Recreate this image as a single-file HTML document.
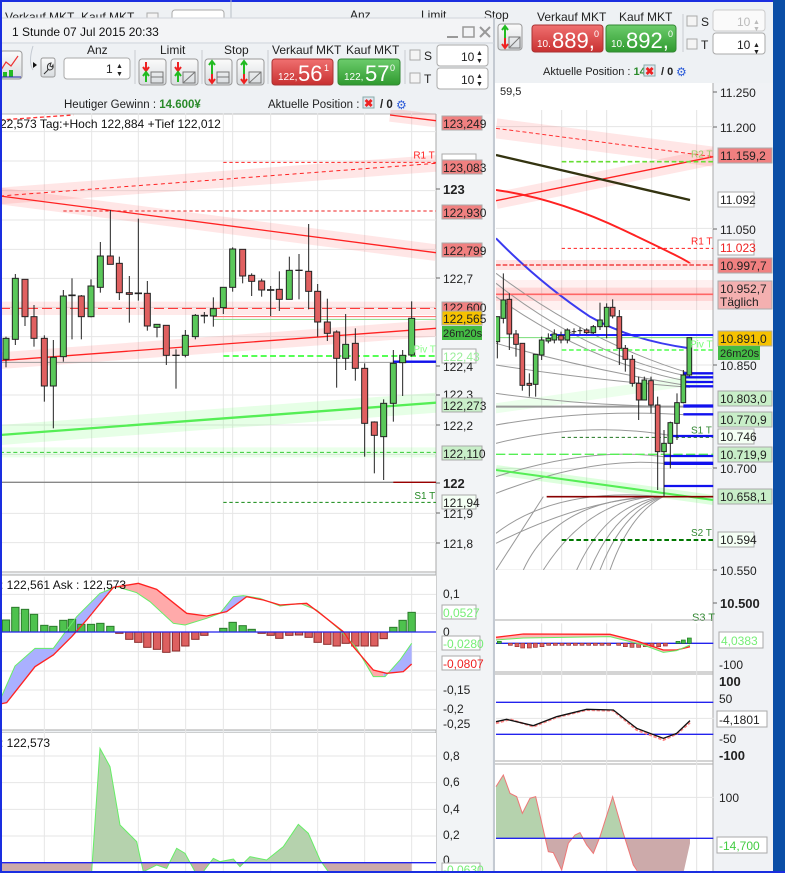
<!DOCTYPE html>
<html><head><meta charset="utf-8"><style>
html,body{margin:0;padding:0;background:#eef1f4;}
svg{display:block;font-family:"Liberation Sans",sans-serif;}
</style></head><body>
<svg width="785" height="873" viewBox="0 0 785 873" xmlns="http://www.w3.org/2000/svg">
<defs>
<clipPath id="cL"><rect x="0" y="0" width="1308" height="1380"/></clipPath>
<clipPath id="cR"><rect x="18" y="0" width="652" height="1380"/></clipPath>
<clipPath id="mBlue"><rect x="0" y="0" width="330" height="600"/><rect x="660" y="0" width="140" height="600"/><rect x="1150" y="0" width="200" height="600"/></clipPath>
<clipPath id="mPink"><rect x="330" y="0" width="330" height="600"/><rect x="800" y="0" width="350" height="600"/></clipPath>
<clipPath id="up1"><rect x="0" y="520" width="1308" height="388"/></clipPath>
<clipPath id="dn1"><rect x="0" y="908" width="1308" height="40"/></clipPath>
<clipPath id="up2"><rect x="18" y="612" width="652" height="223"/></clipPath>
<clipPath id="dn2"><rect x="18" y="835" width="652" height="110"/></clipPath>
<linearGradient id="gRed" x1="0" y1="0" x2="0" y2="1"><stop offset="0" stop-color="#f07070"/><stop offset="1" stop-color="#c83030"/></linearGradient>
<linearGradient id="gGrn" x1="0" y1="0" x2="0" y2="1"><stop offset="0" stop-color="#6ccc6c"/><stop offset="1" stop-color="#2f9a2f"/></linearGradient>
<linearGradient id="gBtn" x1="0" y1="0" x2="0" y2="1"><stop offset="0" stop-color="#fbfbfb"/><stop offset="1" stop-color="#d8dcdf"/></linearGradient>
</defs>

<!-- ============ BACKGROUND WINDOW (right) ============ -->
<rect x="0" y="0" width="785" height="873" fill="#eef1f4"/>
<rect x="0" y="0" width="785" height="2" fill="#1a2ee0"/>
<rect x="773" y="0" width="12" height="873" fill="#0b4ea6"/>
<line x1="231" y1="0" x2="231" y2="18" stroke="#b8bec6"/>
<text x="5" y="21" font-size="12" fill="#222">Verkauf MKT</text>
<text x="81" y="21" font-size="12" fill="#222">Kauf MKT</text>
<rect x="147" y="13" width="11" height="11" fill="#f4f4f4" stroke="#aaa"/>
<rect x="172" y="10" width="52" height="18" rx="3" fill="#fff" stroke="#aaa"/>
<text x="350" y="19" font-size="12" fill="#222">Anz</text>
<text x="421" y="19" font-size="12" fill="#222">Limit</text>
<text x="484" y="19" font-size="12" fill="#222">Stop</text>
<rect x="498" y="24" width="24" height="26" rx="3" fill="url(#gBtn)" stroke="#999"/>
<path d="M505,38 L505,27 M502,30 L505,26 L508,30" stroke="#2b2" stroke-width="2" fill="none"/>
<path d="M505,38 L505,47 M502,44 L505,48 L508,44" stroke="#e22" stroke-width="2" fill="none"/>
<g fill="none" stroke="#777"><rect x="509" y="37" width="11" height="11"/><line x1="509" y1="48" x2="520" y2="37"/></g>
<text x="537" y="21" font-size="12" fill="#222">Verkauf MKT</text>
<text x="619" y="21" font-size="12" fill="#222">Kauf MKT</text>
<rect x="532" y="25" width="71" height="27" rx="3" fill="url(#gRed)" stroke="#a33"/>
<text x="537" y="47" font-size="10" fill="#fff">10.</text><text x="552" y="48" font-size="22" fill="#fff">889,</text><text x="594" y="37" font-size="9" fill="#fff">0</text>
<rect x="606" y="25" width="70" height="27" rx="3" fill="url(#gGrn)" stroke="#383"/>
<text x="611" y="47" font-size="10" fill="#fff">10.</text><text x="626" y="48" font-size="22" fill="#fff">892,</text><text x="668" y="37" font-size="9" fill="#fff">0</text>
<line x1="683" y1="14" x2="683" y2="52" stroke="#c8ccd0"/>
<rect x="687" y="16" width="10" height="10" fill="#f4f4f4" stroke="#aaa"/><text x="701" y="26" font-size="12" fill="#222">S</text>
<rect x="687" y="39" width="10" height="10" fill="#f4f4f4" stroke="#aaa"/><text x="701" y="49" font-size="12" fill="#222">T</text>
<rect x="713" y="10" width="52" height="21" rx="3" fill="#fafafa" stroke="#ccc"/><text x="737" y="26" font-size="12" fill="#bbb">10</text>
<rect x="713" y="33" width="52" height="21" rx="3" fill="#fff" stroke="#aaa"/><text x="737" y="49" font-size="12" fill="#222">10</text>
<text x="753" y="24" font-size="7" fill="#bbb">▲</text><text x="753" y="31" font-size="7" fill="#bbb">▼</text>
<text x="753" y="47" font-size="7" fill="#222">▲</text><text x="753" y="54" font-size="7" fill="#222">▼</text>
<text x="543" y="75" font-size="11" fill="#222">Aktuelle Position : <tspan fill="#2a8a2a" font-weight="bold">14</tspan></text>
<rect x="644" y="65" width="11" height="11" fill="#dfe6ee" stroke="#8aa"/><text x="645" y="75" font-size="11" fill="#e22" font-weight="bold">✖</text>
<text x="661" y="75" font-size="11" fill="#222" font-weight="bold">/ 0</text>
<text x="676" y="76" font-size="12" fill="#2a5ad8">⚙</text>
<rect x="495" y="83" width="218" height="790" fill="#fff"/>
<rect x="713" y="83" width="60" height="790" fill="#f0f2f5"/>
<line x1="713" y1="83" x2="713" y2="873" stroke="#aaa"/>

<g transform="translate(490,110) scale(0.33333)">
 <g clip-path="url(#cR)">
  <g stroke="#e4e4e4" stroke-width="3">
   <line x1="155" y1="-100" x2="155" y2="1400"/><line x1="215" y1="-100" x2="215" y2="1400"/><line x1="290" y1="-100" x2="290" y2="1400"/><line x1="350" y1="-100" x2="350" y2="1400"/><line x1="485" y1="-100" x2="485" y2="1400"/><line x1="620" y1="-100" x2="620" y2="1400"/>
   <line x1="0" y1="-55" x2="670" y2="-55"/><line x1="0" y1="50" x2="670" y2="50"/><line x1="0" y1="355" x2="670" y2="355"/><line x1="0" y1="765" x2="670" y2="765"/><line x1="0" y1="1075" x2="670" y2="1075"/><line x1="0" y1="1380" x2="670" y2="1380"/>
  </g>
  <line x1="18" y1="55" x2="670" y2="140" stroke="#ff4040" stroke-opacity="0.13" stroke-width="60"/>
  <line x1="18" y1="272" x2="670" y2="140" stroke="#ff4040" stroke-opacity="0.13" stroke-width="50"/>
  <line x1="18" y1="465" x2="670" y2="465" stroke="#ff4040" stroke-opacity="0.15" stroke-width="30"/>
  <rect x="18" y="510" width="652" height="90" fill="#ff4040" fill-opacity="0.08"/>
  <line x1="18" y1="553" x2="670" y2="553" stroke="#ff4040" stroke-opacity="0.15" stroke-width="40"/>
  <line x1="18" y1="1080" x2="670" y2="1170" stroke="#40ff40" stroke-opacity="0.18" stroke-width="30"/>
  <line x1="18" y1="850" x2="670" y2="850" stroke="#40ff40" stroke-opacity="0.1" stroke-width="30" transform="rotate(-8 340 900)"/>
  <g fill="none" stroke="#999" stroke-width="3">
   <path d="M18,490 Q300,700 600,790"/><path d="M18,520 Q300,740 600,800"/><path d="M18,560 Q300,760 600,815"/>
   <path d="M18,700 Q300,780 600,828"/><path d="M18,765 Q300,810 600,832"/><path d="M18,850 Q300,890 600,890"/>
   <path d="M18,890 L600,890" stroke-width="6"/><path d="M18,945 Q300,895 600,915"/><path d="M18,1000 Q300,930 560,980"/>
   <path d="M18,1150 Q300,1040 520,1060"/><path d="M18,1100 Q300,1010 520,1040"/>
   <path d="M520,1160 Q300,1160 18,1300"/><path d="M520,1160 Q200,1160 100,1380"/><path d="M520,1160 Q300,1160 160,1380"/>
   <path d="M520,1160 Q350,1180 260,1380"/><path d="M520,1160 Q380,1190 300,1380"/><path d="M520,1160 Q400,1200 330,1380"/><path d="M520,1160 Q420,1210 360,1380"/>
   <path d="M520,1160 Q200,1130 18,1270"/><path d="M18,1380 L160,1160"/>
  </g>
  <line x1="18" y1="55" x2="670" y2="140" stroke="#f33" stroke-width="3" stroke-dasharray="12 8"/>
  <line x1="18" y1="272" x2="670" y2="140" stroke="#f22" stroke-width="4"/>
  <line x1="18" y1="135" x2="600" y2="270" stroke="#333310" stroke-width="7"/>
  <path d="M18,240 Q200,265 400,360 T600,460" fill="none" stroke="#f22" stroke-width="6"/>
  <path d="M18,385 Q150,520 300,620 Q420,690 600,715" fill="none" stroke="#3a3af0" stroke-width="6"/>
  <line x1="215" y1="155" x2="670" y2="155" stroke="#66dd33" stroke-width="5" stroke-dasharray="14 8"/>
  <line x1="215" y1="415" x2="670" y2="415" stroke="#f22" stroke-width="3" stroke-dasharray="10 8"/>
  <line x1="18" y1="465" x2="670" y2="465" stroke="#e22" stroke-width="4" stroke-dasharray="14 6"/>
  <line x1="18" y1="553" x2="670" y2="553" stroke="#f66" stroke-width="5"/>
  <line x1="180" y1="675" x2="670" y2="675" stroke="#22f" stroke-width="6"/>
  <line x1="18" y1="683" x2="670" y2="683" stroke="#7d7" stroke-width="3"/>
  <line x1="215" y1="720" x2="670" y2="720" stroke="#6f6" stroke-width="5" stroke-dasharray="14 8"/>
  <line x1="215" y1="982" x2="670" y2="982" stroke="#272" stroke-width="3" stroke-dasharray="10 8"/>
  <line x1="18" y1="1033" x2="670" y2="1033" stroke="#5e5" stroke-width="4" stroke-dasharray="28 10"/>
  <line x1="18" y1="1080" x2="670" y2="1170" stroke="#5e5" stroke-width="6"/>
  <line x1="170" y1="1160" x2="670" y2="1160" stroke="#800" stroke-width="5"/>
  <line x1="215" y1="1290" x2="670" y2="1290" stroke="#070" stroke-width="6" stroke-dasharray="14 8"/>
  <g stroke="#11e" stroke-width="7">
   <line x1="580" y1="790" x2="670" y2="790"/><line x1="580" y1="802" x2="670" y2="802"/><line x1="580" y1="816" x2="670" y2="816"/><line x1="580" y1="829" x2="670" y2="829"/>
   <line x1="580" y1="888" x2="670" y2="888" stroke-width="10"/><line x1="580" y1="913" x2="670" y2="913"/><line x1="540" y1="978" x2="670" y2="978"/>
   <line x1="522" y1="1038" x2="670" y2="1038"/><line x1="522" y1="1060" x2="670" y2="1060" stroke-width="10"/><line x1="522" y1="1128" x2="670" y2="1128"/>
  </g>
  <g stroke="#222" stroke-width="3">
   <line x1="22" y1="620" x2="22" y2="745"/><rect x="15" y="620" width="14" height="75" fill="#5ac85a"/>
   <line x1="40" y1="490" x2="40" y2="640"/><rect x="33" y="570" width="14" height="55" fill="#5ac85a"/>
   <line x1="58" y1="550" x2="58" y2="720"/><rect x="51" y="568" width="14" height="104" fill="#e06060"/>
   <line x1="78" y1="660" x2="78" y2="740"/><rect x="71" y="672" width="14" height="31" fill="#e06060"/>
   <line x1="97" y1="700" x2="97" y2="842"/><rect x="90" y="700" width="14" height="126" fill="#e06060"/>
   <line x1="118" y1="790" x2="118" y2="860"/><rect x="111" y="820" width="14" height="6" fill="#e06060"/>
   <line x1="137" y1="733" x2="137" y2="860"/><rect x="130" y="733" width="14" height="90" fill="#5ac85a"/>
   <line x1="155" y1="680" x2="155" y2="750"/><rect x="148" y="690" width="14" height="45" fill="#5ac85a"/>
   <line x1="175" y1="670" x2="175" y2="700"/><rect x="168" y="685" width="14" height="8" fill="#5ac85a"/>
   <line x1="193" y1="658" x2="193" y2="700"/><rect x="186" y="672" width="14" height="18" fill="#5ac85a"/>
   <line x1="213" y1="665" x2="213" y2="700"/><rect x="206" y="677" width="14" height="13" fill="#e06060"/>
   <line x1="232" y1="655" x2="232" y2="700"/><rect x="225" y="660" width="14" height="30" fill="#5ac85a"/>
   <line x1="252" y1="655" x2="252" y2="672"/><line x1="245" y1="665" x2="259" y2="665"/>
   <line x1="270" y1="652" x2="270" y2="672"/><line x1="263" y1="662" x2="277" y2="662"/>
   <line x1="290" y1="655" x2="290" y2="672"/><rect x="283" y="660" width="14" height="8" fill="#e06060"/>
   <line x1="310" y1="645" x2="310" y2="672"/><rect x="303" y="650" width="14" height="18" fill="#5ac85a"/>
   <line x1="330" y1="578" x2="330" y2="660"/><rect x="323" y="630" width="14" height="20" fill="#5ac85a"/>
   <line x1="350" y1="580" x2="350" y2="685"/><rect x="343" y="592" width="14" height="58" fill="#5ac85a"/>
   <line x1="368" y1="568" x2="368" y2="625"/><rect x="361" y="592" width="14" height="26" fill="#e06060"/>
   <line x1="388" y1="600" x2="388" y2="765"/><rect x="381" y="620" width="14" height="95" fill="#e06060"/>
   <line x1="406" y1="705" x2="406" y2="785"/><rect x="399" y="715" width="14" height="33" fill="#e06060"/>
   <line x1="427" y1="735" x2="427" y2="830"/><rect x="420" y="748" width="14" height="72" fill="#e06060"/>
   <line x1="446" y1="800" x2="446" y2="930"/><rect x="439" y="820" width="14" height="50" fill="#e06060"/>
   <line x1="463" y1="800" x2="463" y2="870"/><rect x="456" y="810" width="14" height="60" fill="#5ac85a"/>
   <line x1="483" y1="800" x2="483" y2="910"/><rect x="476" y="812" width="14" height="73" fill="#e06060"/>
   <line x1="503" y1="860" x2="503" y2="1140"/><rect x="496" y="885" width="14" height="140" fill="#e06060"/>
   <line x1="522" y1="960" x2="522" y2="1160"/><rect x="515" y="1000" width="14" height="25" fill="#5ac85a"/>
   <line x1="541" y1="935" x2="541" y2="1075"/><rect x="534" y="938" width="14" height="62" fill="#5ac85a"/>
   <line x1="561" y1="850" x2="561" y2="990"/><rect x="554" y="878" width="14" height="62" fill="#5ac85a"/>
   <line x1="580" y1="780" x2="580" y2="880"/><rect x="573" y="795" width="14" height="83" fill="#5ac85a"/>
   <line x1="598" y1="683" x2="598" y2="800"/><rect x="591" y="683" width="14" height="112" fill="#5ac85a"/>
  </g>
  <text x="603" y="143" font-size="30" fill="#9c6">R2 T</text>
  <text x="603" y="403" font-size="30" fill="#f22">R1 T</text>
  <text x="600" y="712" font-size="30" fill="#7f7">Piv T</text>
  <text x="603" y="970" font-size="30" fill="#383">S1 T</text>
  <text x="603" y="1278" font-size="30" fill="#383">S2 T</text>
 </g>
</g>
<text x="500" y="95" font-size="11" fill="#222">59,5</text>
<text x="692" y="621" font-size="11" fill="#383">S3 T</text>

<g font-size="12" fill="#222">
 <g stroke="#666"><line x1="713" y1="92" x2="717" y2="92"/><line x1="713" y1="127" x2="717" y2="127"/><line x1="713" y1="229" x2="717" y2="229"/><line x1="713" y1="365" x2="717" y2="365"/><line x1="713" y1="468" x2="717" y2="468"/><line x1="713" y1="570" x2="717" y2="570"/><line x1="713" y1="603" x2="717" y2="603"/></g>
 <text x="720" y="97">11.250</text><text x="720" y="132">11.200</text>
 <rect x="718" y="148" width="54" height="15" fill="#f08080" stroke="#aaa"/><text x="720" y="160">11.159,2</text>
 <rect x="718" y="192" width="36" height="15" fill="#fff" stroke="#aaa"/><text x="720" y="204">11.092</text>
 <text x="720" y="234">11.050</text>
 <rect x="718" y="240" width="36" height="15" fill="#fff" stroke="#aaa"/><text x="720" y="252" fill="#e22">11.023</text>
 <rect x="718" y="258" width="54" height="15" fill="#f08080" stroke="#aaa"/><text x="720" y="270">10.997,7</text>
 <rect x="718" y="281" width="54" height="28" fill="#f4b0b0" stroke="#aaa"/><text x="720" y="293">10.952,7</text><text x="720" y="306">Täglich</text>
 <rect x="718" y="331" width="54" height="15" fill="#f6c200" stroke="#aaa"/><text x="720" y="343">10.891,0</text>
 <rect x="718" y="346" width="42" height="14" fill="#44bb44"/><text x="720" y="357" font-size="11">26m20s</text>
 <text x="720" y="370">10.850</text>
 <rect x="718" y="391" width="54" height="15" fill="#c8eec8" stroke="#aaa"/><text x="720" y="403">10.803,0</text>
 <rect x="718" y="412" width="54" height="15" fill="#c8eec8" stroke="#aaa"/><text x="720" y="424">10.770,9</text>
 <rect x="718" y="429" width="36" height="15" fill="#f4fff4" stroke="#aaa"/><text x="720" y="441">10.746</text>
 <rect x="718" y="447" width="54" height="15" fill="#c8eec8" stroke="#aaa"/><text x="720" y="459">10.719,9</text>
 <text x="720" y="473">10.700</text>
 <rect x="718" y="489" width="54" height="15" fill="#c8eec8" stroke="#aaa"/><text x="720" y="501">10.658,1</text>
 <rect x="718" y="532" width="36" height="15" fill="#f4fff4" stroke="#aaa"/><text x="720" y="544">10.594</text>
 <text x="720" y="575">10.550</text>
 <text x="720" y="608" font-weight="bold" font-size="13">10.500</text>
</g>

<line x1="495" y1="620" x2="713" y2="620" stroke="#aaa"/>
<line x1="495" y1="672" x2="713" y2="672" stroke="#aaa"/>
<line x1="495" y1="674" x2="713" y2="674" stroke="#aaa"/>
<line x1="495" y1="761" x2="713" y2="761" stroke="#aaa"/>
<line x1="495" y1="764" x2="713" y2="764" stroke="#aaa"/>
<g transform="translate(490,560) scale(0.33333)">
 <g stroke="#e4e4e4" stroke-width="3">
  <line x1="155" y1="190" x2="155" y2="940"/><line x1="215" y1="190" x2="215" y2="940"/><line x1="350" y1="190" x2="350" y2="940"/><line x1="485" y1="190" x2="485" y2="940"/><line x1="620" y1="190" x2="620" y2="940"/>
  <line x1="18" y1="475" x2="670" y2="475"/><line x1="18" y1="712" x2="670" y2="712"/>
 </g>
 <line x1="18" y1="250" x2="670" y2="250" stroke="#22e" stroke-width="4"/>
 <g fill="#e06060" stroke="#933" stroke-width="2">
  <rect x="55" y="250" width="12" height="6"/><rect x="75" y="250" width="12" height="10"/><rect x="92" y="250" width="12" height="14"/><rect x="112" y="250" width="12" height="14"/><rect x="130" y="250" width="12" height="12"/><rect x="150" y="250" width="12" height="10"/><rect x="170" y="250" width="12" height="6"/><rect x="190" y="250" width="12" height="6"/><rect x="210" y="250" width="12" height="6"/><rect x="230" y="250" width="12" height="6"/><rect x="250" y="250" width="12" height="6"/><rect x="270" y="250" width="12" height="6"/><rect x="290" y="250" width="12" height="6"/><rect x="310" y="250" width="12" height="6"/><rect x="330" y="250" width="12" height="6"/><rect x="350" y="250" width="12" height="6"/><rect x="380" y="250" width="12" height="6"/><rect x="400" y="250" width="12" height="10"/><rect x="420" y="250" width="12" height="12"/><rect x="440" y="250" width="12" height="12"/><rect x="460" y="250" width="12" height="10"/><rect x="480" y="250" width="12" height="10"/><rect x="500" y="250" width="12" height="10"/><rect x="520" y="250" width="12" height="8"/>
 </g>
 <g fill="#44bb44" stroke="#272" stroke-width="2"><rect x="22" y="244" width="12" height="6"/><rect x="558" y="244" width="12" height="6"/><rect x="574" y="240" width="12" height="10"/><rect x="592" y="234" width="12" height="16"/></g>
 <path d="M18,232 L100,222 L360,223 L440,243 L520,270 L560,270 L600,260 L600,255 L560,272 L520,277 L460,255 L360,230 L100,234 L18,240 Z" fill="#f99" fill-opacity="0.7"/>
 <polyline points="18,232 100,222 360,223 440,243 520,270 560,270 600,260" fill="none" stroke="#f22" stroke-width="4"/>
 <polyline points="18,240 100,234 360,230 460,255 520,277 560,272 600,255" fill="none" stroke="#6e6" stroke-width="3"/>
 <line x1="18" y1="427" x2="670" y2="427" stroke="#22e" stroke-width="4"/>
 <line x1="18" y1="523" x2="670" y2="523" stroke="#22e" stroke-width="4"/>
 <polyline points="18,490 60,478 130,500 200,472 290,450 370,452 440,510 520,540 560,522 600,488" fill="none" stroke="#f88" stroke-width="6" stroke-dasharray="10 5"/>
 <polyline points="18,485 50,478 130,497 200,470 290,448 370,450 440,505 520,535 560,520 600,482" fill="none" stroke="#111" stroke-width="4"/>
 <g clip-path="url(#up2)"><polygon points="18,835 18,680 40,645 60,700 80,710 97,760 120,715 137,710 175,875 190,878 215,930 235,850 255,825 270,818 290,855 310,880 330,830 368,710 400,820 430,915 450,940 580,940 600,850 600,835" fill="#b5d2ad"/></g>
 <g clip-path="url(#dn2)"><polygon points="18,835 18,680 40,645 60,700 80,710 97,760 120,715 137,710 175,875 190,878 215,930 235,850 255,825 270,818 290,855 310,880 330,830 368,710 400,820 430,915 450,940 580,940 600,850 600,835" fill="#ccaaaa"/></g>
 <polyline points="18,680 40,645 60,700 80,710 97,760 120,715 137,710 175,875 190,878 215,930 235,850 255,825 270,818 290,855 310,880 330,830 368,710 400,820 430,915 450,945" fill="none" stroke="#e77" stroke-width="3"/>
 <line x1="18" y1="835" x2="670" y2="835" stroke="#22e" stroke-width="4"/>
</g>
<g font-size="12" fill="#222">
 <rect x="719" y="632" width="44" height="16" fill="#fff" stroke="#aaa"/><text x="721" y="645" fill="#7e7">4,0383</text>
 <text x="719" y="669">-100</text>
 <text x="719" y="686" font-weight="bold" font-size="13">100</text>
 <text x="719" y="703">50</text>
 <rect x="717" y="711" width="50" height="16" fill="#fff" stroke="#aaa"/><text x="719" y="724">-4,1801</text>
 <text x="719" y="743">-50</text>
 <text x="719" y="760" font-weight="bold" font-size="13">-100</text>
 <text x="719" y="802">100</text>
 <rect x="717" y="837" width="50" height="16" fill="#fff" stroke="#aaa"/><text x="719" y="850" fill="#4c4">-14,700</text>
</g>

<!-- ============ FRONT WINDOW ============ -->
<rect x="0" y="18" width="494" height="855" fill="#eef1f4"/>
<rect x="0" y="18" width="494" height="24" fill="#f3f4f6"/>
<line x1="494" y1="18" x2="494" y2="873" stroke="#c4cad2" stroke-width="2"/>
<line x1="0" y1="18" x2="494" y2="18" stroke="#d0d5db"/>
<text x="12" y="36" font-size="12" fill="#111">1 Stunde  07 Jul 2015 20:33</text>
<line x1="447" y1="37" x2="458" y2="37" stroke="#999" stroke-width="2"/>
<rect x="463" y="27" width="11" height="10" fill="none" stroke="#999" stroke-width="1.5"/>
<path d="M480,27 L490,37 M490,27 L480,37" stroke="#999" stroke-width="2"/>
<line x1="0" y1="43" x2="494" y2="43" stroke="#d0d5db"/>
<rect x="0" y="51" width="22" height="28" rx="3" fill="url(#gBtn)" stroke="#999"/>
<path d="M1,70 L6,62 L11,66 L18,56" fill="none" stroke="#e33" stroke-width="1.2"/>
<rect x="3" y="72" width="4" height="5" fill="#2b2"/><rect x="9" y="70" width="4" height="7" fill="#2b2"/>
<line x1="0" y1="77" x2="21" y2="77" stroke="#22a"/>
<path d="M33,70 Q28,62 33,46" fill="none" stroke="#c4cad2"/>
<path d="M33,62 L37,65 L33,68 Z" fill="#111"/>
<rect x="41" y="58" width="14" height="19" rx="2" fill="url(#gBtn)" stroke="#999"/>
<path d="M44,74 L49,69 M48,70 Q46,64 51,63 L50,66 L52,67 L53,65 Q54,70 49,70" fill="none" stroke="#333" stroke-width="1"/>
<text x="87" y="54" font-size="12" fill="#222">Anz</text>
<rect x="64" y="58" width="66" height="21" rx="3" fill="#fff" stroke="#aaa"/>
<text x="106" y="73" font-size="12" fill="#222">1</text>
<text x="116" y="68" font-size="7" fill="#222">▲</text><text x="116" y="76" font-size="7" fill="#222">▼</text>
<line x1="135" y1="50" x2="135" y2="84" stroke="#c8ccd0"/>
<text x="160" y="54" font-size="12" fill="#222">Limit</text>
<rect x="139" y="59" width="27" height="26" rx="3" fill="url(#gBtn)" stroke="#999"/>
<rect x="171" y="59" width="27" height="26" rx="3" fill="url(#gBtn)" stroke="#999"/>
<line x1="202" y1="50" x2="202" y2="84" stroke="#c8ccd0"/>
<text x="224" y="54" font-size="12" fill="#222">Stop</text>
<rect x="205" y="59" width="27" height="26" rx="3" fill="url(#gBtn)" stroke="#999"/>
<rect x="237" y="59" width="27" height="26" rx="3" fill="url(#gBtn)" stroke="#999"/>
<g stroke-width="2">
 <path d="M146,62 L146,70 M143,67 L146,71 L149,67" stroke="#e22" fill="none"/><path d="M146,82 L146,73 M143,76 L146,72 L149,76" stroke="#2b2" fill="none"/>
 <path d="M178,62 L178,70 M175,67 L178,71 L181,67" stroke="#e22" fill="none"/><path d="M178,82 L178,73 M175,76 L178,72 L181,76" stroke="#2b2" fill="none"/>
 <path d="M212,74 L212,62 M209,65 L212,61 L215,65" stroke="#2b2" fill="none"/><path d="M212,74 L212,82 M209,79 L212,83 L215,79" stroke="#e22" fill="none"/>
 <path d="M244,74 L244,62 M241,65 L244,61 L247,65" stroke="#2b2" fill="none"/><path d="M244,74 L244,82 M241,79 L244,83 L247,79" stroke="#e22" fill="none"/>
</g>
<g fill="none" stroke="#777"><rect x="151" y="72" width="12" height="11"/><line x1="151" y1="77" x2="163" y2="77"/><rect x="183" y="72" width="12" height="11"/><line x1="183" y1="83" x2="195" y2="72"/><rect x="217" y="72" width="12" height="11"/><line x1="217" y1="77" x2="229" y2="77"/><rect x="249" y="72" width="12" height="11"/><line x1="249" y1="83" x2="261" y2="72"/></g>
<line x1="268" y1="50" x2="268" y2="84" stroke="#c8ccd0"/>
<text x="272" y="54" font-size="12" fill="#222">Verkauf MKT</text>
<text x="346" y="54" font-size="12" fill="#222">Kauf MKT</text>
<rect x="272" y="59" width="61" height="26" rx="3" fill="url(#gRed)" stroke="#a33"/>
<text x="278" y="80" font-size="10" fill="#fff">122,</text><text x="298" y="81" font-size="22" fill="#fff">56</text><text x="324" y="71" font-size="9" fill="#fff">1</text>
<rect x="338" y="59" width="62" height="26" rx="3" fill="url(#gGrn)" stroke="#383"/>
<text x="344" y="80" font-size="10" fill="#fff">122,</text><text x="365" y="81" font-size="22" fill="#fff">57</text><text x="390" y="71" font-size="9" fill="#fff">0</text>
<line x1="405" y1="50" x2="405" y2="84" stroke="#c8ccd0"/>
<rect x="410" y="50" width="10" height="10" fill="#f4f4f4" stroke="#aaa"/><text x="424" y="60" font-size="12" fill="#222">S</text>
<rect x="410" y="73" width="10" height="10" fill="#f4f4f4" stroke="#aaa"/><text x="424" y="83" font-size="12" fill="#222">T</text>
<rect x="437" y="45" width="51" height="21" rx="3" fill="#fff" stroke="#aaa"/><text x="461" y="61" font-size="12" fill="#222">10</text>
<rect x="437" y="68" width="51" height="21" rx="3" fill="#fff" stroke="#aaa"/><text x="461" y="84" font-size="12" fill="#222">10</text>
<text x="476" y="55" font-size="7" fill="#222">▲</text><text x="476" y="63" font-size="7" fill="#222">▼</text>
<text x="476" y="78" font-size="7" fill="#222">▲</text><text x="476" y="86" font-size="7" fill="#222">▼</text>
<text x="64" y="108" font-size="11.5" fill="#222">Heutiger Gewinn : <tspan fill="#2a8a2a" font-weight="bold">14.600¥</tspan></text>
<text x="268" y="108" font-size="11.5" fill="#222">Aktuelle Position : <tspan fill="#2a8a2a" font-weight="bold">1</tspan></text>
<rect x="363" y="97" width="11" height="11" fill="#dfe6ee" stroke="#8aa"/><text x="364" y="107" font-size="11" fill="#e22" font-weight="bold">✖</text>
<text x="380" y="108" font-size="11.5" fill="#222" font-weight="bold">/ 0</text>
<text x="396" y="109" font-size="12" fill="#2a5ad8">⚙</text>

<rect x="0" y="114" width="436" height="459" fill="#fff"/>
<rect x="436" y="114" width="56" height="759" fill="#f2f4f6"/>
<line x1="436" y1="114" x2="436" y2="873" stroke="#aaa"/>
<line x1="0" y1="114" x2="436" y2="114" stroke="#bbb"/>
<g transform="translate(0,110) scale(0.33333)">
 <g clip-path="url(#cL)">
 <g stroke="#e6e6e6" stroke-width="3">
  <line x1="133" y1="10" x2="133" y2="1380"/><line x1="275" y1="10" x2="275" y2="1380"/><line x1="415" y1="10" x2="415" y2="1380"/><line x1="557" y1="10" x2="557" y2="1380"/><line x1="670" y1="10" x2="670" y2="1380"/><line x1="698" y1="10" x2="698" y2="1380"/><line x1="812" y1="10" x2="812" y2="1380"/><line x1="953" y1="10" x2="953" y2="1380"/><line x1="1094" y1="10" x2="1094" y2="1380"/><line x1="1235" y1="10" x2="1235" y2="1380"/>
  <line x1="0" y1="65" x2="1308" y2="65"/><line x1="0" y1="153" x2="1308" y2="153"/><line x1="0" y1="242" x2="1308" y2="242"/><line x1="0" y1="330" x2="1308" y2="330"/><line x1="0" y1="418" x2="1308" y2="418"/><line x1="0" y1="505" x2="1308" y2="505"/><line x1="0" y1="592" x2="1308" y2="592"/><line x1="0" y1="680" x2="1308" y2="680"/><line x1="0" y1="855" x2="1308" y2="855"/><line x1="0" y1="945" x2="1308" y2="945"/><line x1="0" y1="1033" x2="1308" y2="1033"/><line x1="0" y1="1210" x2="1308" y2="1210"/><line x1="0" y1="1298" x2="1308" y2="1298"/>
 </g>
 <line x1="0" y1="258" x2="1308" y2="160" stroke="#ff3030" stroke-opacity="0.12" stroke-width="50"/>
 <line x1="0" y1="258" x2="1308" y2="428" stroke="#ff3030" stroke-opacity="0.12" stroke-width="50"/>
 <line x1="0" y1="595" x2="1308" y2="595" stroke="#ff3030" stroke-opacity="0.1" stroke-width="40"/>
 <line x1="0" y1="752" x2="1308" y2="655" stroke="#ff3030" stroke-opacity="0.12" stroke-width="50"/>
 <line x1="0" y1="975" x2="1308" y2="878" stroke="#30ff30" stroke-opacity="0.12" stroke-width="60"/>
 <line x1="0" y1="1027" x2="1308" y2="1027" stroke="#30ff30" stroke-opacity="0.1" stroke-width="30"/>
 <line x1="1170" y1="15" x2="1308" y2="32" stroke="#ff3030" stroke-opacity="0.12" stroke-width="40"/>
 <line x1="0" y1="30" x2="220" y2="15" stroke="#f33" stroke-width="4" stroke-dasharray="12 8"/>
 <line x1="1170" y1="15" x2="1308" y2="32" stroke="#f22" stroke-width="4"/>
 <line x1="670" y1="157" x2="1308" y2="157" stroke="#f22" stroke-width="3" stroke-dasharray="10 8"/>
 <line x1="0" y1="258" x2="1308" y2="160" stroke="#f22" stroke-width="3" stroke-dasharray="12 10"/>
 <line x1="0" y1="258" x2="1308" y2="428" stroke="#f22" stroke-width="4"/>
 <line x1="190" y1="303" x2="1308" y2="303" stroke="#e22" stroke-width="3" stroke-dasharray="10 8"/>
 <line x1="0" y1="595" x2="1308" y2="595" stroke="#f22" stroke-width="3" stroke-dasharray="30 12"/>
 <line x1="640" y1="620" x2="1308" y2="620" stroke="#f66" stroke-width="3"/>
 <line x1="640" y1="628" x2="1308" y2="628" stroke="#8d8" stroke-width="3"/>
 <line x1="0" y1="752" x2="1308" y2="655" stroke="#f22" stroke-width="4"/>
 <line x1="0" y1="757" x2="1308" y2="757" stroke="#999" stroke-width="3"/>
 <line x1="670" y1="738" x2="1308" y2="738" stroke="#5f5" stroke-width="6" stroke-dasharray="18 10"/>
 <line x1="1180" y1="755" x2="1308" y2="755" stroke="#11e" stroke-width="7"/>
 <line x1="0" y1="975" x2="1308" y2="878" stroke="#5e5" stroke-width="7"/>
 <line x1="0" y1="1027" x2="1308" y2="1027" stroke="#3c3" stroke-width="3" stroke-dasharray="12 8"/>
 <line x1="0" y1="1117" x2="1308" y2="1117" stroke="#888" stroke-width="4"/>
 <line x1="1180" y1="1117" x2="1308" y2="1117" stroke="#900" stroke-width="4"/>
 <line x1="670" y1="1177" x2="1308" y2="1177" stroke="#181" stroke-width="3" stroke-dasharray="10 8"/>
 <g stroke="#222" stroke-width="3">
  <line x1="18" y1="680" x2="18" y2="772"/><rect x="9" y="685" width="18" height="63" fill="#5ac85a"/>
  <line x1="46" y1="492" x2="46" y2="705"/><rect x="37" y="505" width="18" height="183" fill="#5ac85a"/>
  <line x1="75" y1="508" x2="75" y2="648"/><rect x="66" y="508" width="18" height="112" fill="#e06060"/>
  <line x1="102" y1="585" x2="102" y2="710"/><rect x="93" y="620" width="18" height="65" fill="#e06060"/>
  <line x1="133" y1="676" x2="133" y2="875"/><rect x="124" y="685" width="18" height="143" fill="#e06060"/>
  <line x1="160" y1="690" x2="160" y2="955"/><rect x="151" y="742" width="18" height="86" fill="#5ac85a"/>
  <line x1="190" y1="540" x2="190" y2="755"/><rect x="181" y="558" width="18" height="182" fill="#5ac85a"/>
  <line x1="216" y1="505" x2="216" y2="688"/><line x1="205" y1="556" x2="227" y2="556" stroke-width="5"/>
  <line x1="244" y1="555" x2="244" y2="688"/><rect x="235" y="558" width="18" height="62" fill="#e06060"/>
  <line x1="273" y1="508" x2="273" y2="622"/><rect x="264" y="528" width="18" height="92" fill="#5ac85a"/>
  <line x1="301" y1="396" x2="301" y2="548"/><rect x="292" y="438" width="18" height="94" fill="#5ac85a"/>
  <line x1="331" y1="300" x2="331" y2="438"/>
  <rect x="322" y="438" width="18" height="25" fill="#e06060"/>
  <line x1="358" y1="440" x2="358" y2="570"/><rect x="349" y="460" width="18" height="88" fill="#e06060"/>
  <line x1="388" y1="498" x2="388" y2="638"/><rect x="379" y="548" width="18" height="5" fill="#e06060"/>
  <line x1="415" y1="326" x2="415" y2="572"/><line x1="404" y1="550" x2="426" y2="550" stroke-width="5"/>
  <line x1="442" y1="513" x2="442" y2="662"/><rect x="433" y="550" width="18" height="98" fill="#e06060"/>
  <line x1="471" y1="643" x2="471" y2="682"/><rect x="462" y="643" width="18" height="9" fill="#5ac85a"/>
  <line x1="499" y1="646" x2="499" y2="765"/><rect x="490" y="646" width="18" height="90" fill="#e06060"/>
  <line x1="528" y1="718" x2="528" y2="836"/><line x1="517" y1="736" x2="539" y2="736" stroke-width="4"/>
  <line x1="556" y1="660" x2="556" y2="742"/><rect x="547" y="676" width="18" height="60" fill="#5ac85a"/>
  <line x1="586" y1="612" x2="586" y2="688"/><rect x="577" y="616" width="18" height="64" fill="#5ac85a"/>
  <line x1="613" y1="606" x2="613" y2="640"/><line x1="602" y1="617" x2="624" y2="617" stroke-width="5"/>
  <line x1="640" y1="562" x2="640" y2="650"/><rect x="631" y="596" width="18" height="22" fill="#5ac85a"/>
  <line x1="670" y1="532" x2="670" y2="612"/><rect x="661" y="532" width="18" height="61" fill="#5ac85a"/>
  <line x1="698" y1="412" x2="698" y2="545"/><rect x="689" y="417" width="18" height="115" fill="#5ac85a"/>
  <line x1="728" y1="418" x2="728" y2="520"/><rect x="719" y="418" width="18" height="80" fill="#e06060"/>
  <line x1="755" y1="490" x2="755" y2="558"/><rect x="746" y="496" width="18" height="18" fill="#e06060"/>
  <line x1="785" y1="506" x2="785" y2="560"/><rect x="776" y="513" width="18" height="27" fill="#e06060"/>
  <line x1="812" y1="528" x2="812" y2="618"/><line x1="801" y1="540" x2="823" y2="540" stroke-width="5"/>
  <line x1="838" y1="484" x2="838" y2="603"/><rect x="829" y="538" width="18" height="30" fill="#e06060"/>
  <line x1="868" y1="440" x2="868" y2="568"/><rect x="859" y="481" width="18" height="87" fill="#5ac85a"/>
  <line x1="897" y1="432" x2="897" y2="568"/><line x1="886" y1="481" x2="908" y2="481" stroke-width="4"/>
  <line x1="926" y1="342" x2="926" y2="598"/><rect x="917" y="484" width="18" height="60" fill="#e06060"/>
  <line x1="953" y1="522" x2="953" y2="680"/><rect x="944" y="544" width="18" height="92" fill="#e06060"/>
  <line x1="982" y1="566" x2="982" y2="693"/><rect x="973" y="636" width="18" height="34" fill="#e06060"/>
  <line x1="1010" y1="661" x2="1010" y2="833"/><rect x="1001" y="666" width="18" height="79" fill="#e06060"/>
  <line x1="1037" y1="612" x2="1037" y2="780"/><rect x="1028" y="703" width="18" height="42" fill="#5ac85a"/>
  <line x1="1066" y1="655" x2="1066" y2="812"/><rect x="1057" y="700" width="18" height="75" fill="#e06060"/>
  <line x1="1094" y1="760" x2="1094" y2="1040"/><rect x="1085" y="775" width="18" height="165" fill="#e06060"/>
  <line x1="1123" y1="934" x2="1123" y2="1090"/><rect x="1114" y="936" width="18" height="40" fill="#e06060"/>
  <line x1="1151" y1="868" x2="1151" y2="1110"/><rect x="1142" y="880" width="18" height="100" fill="#5ac85a"/>
  <line x1="1180" y1="720" x2="1180" y2="935"/><rect x="1171" y="760" width="18" height="120" fill="#5ac85a"/>
  <line x1="1208" y1="720" x2="1208" y2="858"/><rect x="1199" y="736" width="18" height="22" fill="#5ac85a"/>
  <line x1="1235" y1="574" x2="1235" y2="740"/><rect x="1226" y="625" width="18" height="110" fill="#5ac85a"/>
 </g>
 <text x="1240" y="145" font-size="30" fill="#f22">R1 T</text>
 <text x="1240" y="727" font-size="30" fill="#8f8">Piv T</text>
 <text x="1243" y="1167" font-size="30" fill="#282">S1 T</text>
 </g>
</g>
<text x="0" y="128" font-size="12" fill="#111">22,573 Tag:+Hoch 122,884 +Tief 122,012</text>

<g font-size="12" fill="#222">
 <g stroke="#666"><line x1="436" y1="189" x2="440" y2="189"/><line x1="436" y1="278" x2="440" y2="278"/><line x1="436" y1="366" x2="440" y2="366"/><line x1="436" y1="395" x2="440" y2="395"/><line x1="436" y1="425" x2="440" y2="425"/><line x1="436" y1="483" x2="440" y2="483"/><line x1="436" y1="513" x2="440" y2="513"/><line x1="436" y1="543" x2="440" y2="543"/></g>
 <rect x="442" y="116" width="40" height="14" fill="#f08080" stroke="#aaa"/><text x="443" y="128">123,249</text>
 <rect x="442" y="154" width="34" height="6" fill="#fff" stroke="#aaa"/>
 <rect x="442" y="160" width="40" height="14" fill="#f08080" stroke="#aaa"/><text x="443" y="172">123,083</text>
 <text x="443" y="194" font-weight="bold" font-size="13">123</text>
 <rect x="442" y="205" width="40" height="14" fill="#f08080" stroke="#aaa"/><text x="443" y="217">122,930</text>
 <rect x="442" y="243" width="40" height="14" fill="#f08080" stroke="#aaa"/><text x="443" y="255">122,799</text>
 <text x="443" y="283">122,7</text>
 <rect x="442" y="302" width="40" height="10" fill="#f08080" stroke="#aaa"/><text x="443" y="312">122,600</text>
 <rect x="442" y="311" width="40" height="14" fill="#f6c200" stroke="#aaa"/><text x="443" y="323">122,565</text>
 <rect x="442" y="326" width="40" height="14" fill="#44bb44"/><text x="443" y="337" font-size="11">26m20s</text>
 <rect x="442" y="349" width="34" height="14" fill="#fff" stroke="#aaa"/><text x="443" y="361" fill="#9e9">122,43</text>
 <text x="443" y="371">122,4</text>
 <text x="443" y="399">122,3</text>
 <rect x="442" y="398" width="40" height="14" fill="#c8eec8" stroke="#aaa"/><text x="443" y="410">122,273</text>
 <text x="443" y="430">122,2</text>
 <rect x="442" y="446" width="40" height="14" fill="#c8eec8" stroke="#aaa"/><text x="443" y="458">122,110</text>
 <text x="443" y="488" font-weight="bold" font-size="13">122</text>
 <rect x="442" y="495" width="34" height="14" fill="#f4fff4" stroke="#aaa"/><text x="443" y="507">121,94</text>
 <text x="443" y="518">121,9</text>
 <text x="443" y="548">121,8</text>
</g>

<rect x="0" y="575" width="436" height="155" fill="#fff"/>
<line x1="0" y1="572" x2="436" y2="572" stroke="#aaa"/>
<line x1="0" y1="575" x2="436" y2="575" stroke="#aaa"/>
<line x1="0" y1="730" x2="436" y2="730" stroke="#aaa"/>
<line x1="0" y1="733" x2="436" y2="733" stroke="#aaa"/>
<rect x="0" y="733" width="436" height="140" fill="#fff"/>
<g transform="translate(0,560) scale(0.33333)">
 <g stroke="#e6e6e6" stroke-width="3">
  <line x1="133" y1="50" x2="133" y2="940"/><line x1="275" y1="50" x2="275" y2="940"/><line x1="415" y1="50" x2="415" y2="940"/><line x1="557" y1="50" x2="557" y2="940"/><line x1="670" y1="50" x2="670" y2="940"/><line x1="812" y1="50" x2="812" y2="940"/><line x1="953" y1="50" x2="953" y2="940"/><line x1="1094" y1="50" x2="1094" y2="940"/><line x1="1235" y1="50" x2="1235" y2="940"/>
  <line x1="0" y1="103" x2="1308" y2="103"/><line x1="0" y1="160" x2="1308" y2="160"/><line x1="0" y1="275" x2="1308" y2="275"/><line x1="0" y1="333" x2="1308" y2="333"/><line x1="0" y1="390" x2="1308" y2="390"/><line x1="0" y1="448" x2="1308" y2="448"/>
  <line x1="0" y1="588" x2="1308" y2="588"/><line x1="0" y1="668" x2="1308" y2="668"/><line x1="0" y1="748" x2="1308" y2="748"/><line x1="0" y1="828" x2="1308" y2="828"/>
 </g>
 <polygon clip-path="url(#mBlue)" points="0,420 45,318 105,265 160,265 230,170 300,100 350,80 410,98 450,125 520,190 555,195 620,175 660,160 700,110 730,107 780,115 840,138 900,130 950,150 1020,210 1070,265 1120,350 1155,350 1200,300 1235,250 1235,312 1210,335 1160,340 1120,330 1060,260 1030,215 960,160 920,130 840,135 790,120 740,110 680,155 620,168 560,160 470,88 415,70 340,82 260,180 215,230 160,285 105,320 20,428 0,432" fill="#aab0ff"/>
 <polygon clip-path="url(#mPink)" points="0,420 45,318 105,265 160,265 230,170 300,100 350,80 410,98 450,125 520,190 555,195 620,175 660,160 700,110 730,107 780,115 840,138 900,130 950,150 1020,210 1070,265 1120,350 1155,350 1200,300 1235,250 1235,312 1210,335 1160,340 1120,330 1060,260 1030,215 960,160 920,130 840,135 790,120 740,110 680,155 620,168 560,160 470,88 415,70 340,82 260,180 215,230 160,285 105,320 20,428 0,432" fill="#ffaaaa"/>
 <g stroke="#2a7a2a" stroke-width="3" fill="#4ec24e">
  <rect x="7" y="180" width="22" height="36"/><rect x="35" y="142" width="22" height="74"/><rect x="64" y="148" width="22" height="68"/><rect x="91" y="163" width="22" height="53"/><rect x="122" y="196" width="22" height="20"/><rect x="149" y="199" width="22" height="17"/><rect x="179" y="181" width="22" height="35"/><rect x="205" y="178" width="22" height="38"/><rect x="233" y="193" width="22" height="23"/><rect x="262" y="193" width="22" height="23"/><rect x="290" y="190" width="22" height="26"/><rect x="320" y="199" width="22" height="17"/>
  <rect x="659" y="205" width="22" height="11"/><rect x="687" y="187" width="22" height="29"/><rect x="717" y="197" width="22" height="19"/><rect x="744" y="208" width="22" height="8"/>
  <rect x="1169" y="202" width="22" height="14"/><rect x="1197" y="181" width="22" height="35"/><rect x="1224" y="157" width="22" height="59"/>
 </g>
 <g stroke="#8a2a2a" stroke-width="3" fill="#dd6060">
  <rect x="347" y="216" width="22" height="4"/><rect x="377" y="216" width="22" height="22"/><rect x="404" y="216" width="22" height="31"/><rect x="431" y="216" width="22" height="46"/><rect x="460" y="216" width="22" height="52"/><rect x="488" y="216" width="22" height="61"/><rect x="517" y="216" width="22" height="57"/><rect x="545" y="216" width="22" height="42"/><rect x="575" y="216" width="22" height="22"/><rect x="602" y="216" width="22" height="10"/>
  <rect x="774" y="216" width="22" height="4"/><rect x="801" y="216" width="22" height="10"/><rect x="827" y="216" width="22" height="19"/><rect x="857" y="216" width="22" height="10"/><rect x="886" y="216" width="22" height="9"/><rect x="915" y="216" width="22" height="16"/><rect x="942" y="216" width="22" height="31"/><rect x="971" y="216" width="22" height="37"/><rect x="999" y="216" width="22" height="42"/><rect x="1026" y="216" width="22" height="34"/><rect x="1055" y="216" width="22" height="42"/><rect x="1083" y="216" width="22" height="42"/><rect x="1112" y="216" width="22" height="42"/><rect x="1140" y="216" width="22" height="20"/>
 </g>
 <polyline points="0,420 45,318 105,265 160,265 230,170 300,100 350,80 410,98 450,125 520,190 555,195 620,175 660,160 700,110 730,107 780,115 840,138 900,130 950,150 1020,210 1070,265 1120,350 1155,350 1200,300 1235,250" fill="none" stroke="#6e6" stroke-width="3"/>
 <polyline points="0,432 20,428 105,320 160,285 215,230 260,180 340,82 415,70 470,88 560,160 620,168 680,155 740,110 790,120 840,135 920,130 960,160 1030,215 1060,260 1120,330 1160,340 1210,335 1235,312" fill="none" stroke="#f22" stroke-width="4"/>
 <line x1="0" y1="216" x2="1308" y2="216" stroke="#22e" stroke-width="4"/>
 <g clip-path="url(#up1)"><polygon points="0,908 0,930 275,930 300,565 330,620 360,795 410,845 430,935 470,915 500,925 530,865 555,880 585,935 610,935 640,895 660,905 700,897 720,920 750,890 800,900 850,860 895,793 925,820 960,900 985,935 1235,935 1235,908" fill="#b5d2ad"/></g>
 <g clip-path="url(#dn1)"><polygon points="0,908 0,940 275,940 300,565 330,620 360,795 410,845 430,935 470,915 500,925 530,865 555,880 585,935 610,935 640,895 660,905 700,897 720,920 750,890 800,900 850,860 895,793 925,820 960,900 985,935 1235,940 1235,908" fill="#ccaaaa"/></g>
 <polyline points="275,935 300,565 330,620 360,795 410,845 430,935 470,915 500,925 530,865 555,880 585,935 610,935 640,895 660,905 700,897 720,920 750,890 800,900 850,860 895,793 925,820 960,900 985,935" fill="none" stroke="#6e6" stroke-width="3"/>
 <line x1="0" y1="908" x2="1308" y2="908" stroke="#22e" stroke-width="4"/>
</g>
<text x="0" y="589" font-size="12" fill="#111">: 122,561 Ask : 122,573</text>
<text x="0" y="747" font-size="12" fill="#111">: 122,573</text>
<g font-size="12" fill="#222">
 <text x="443" y="598">0,1</text>
 <rect x="442" y="605" width="34" height="14" fill="#fff" stroke="#aaa"/><text x="443" y="617" fill="#7e7">0,0527</text>
 <text x="443" y="636">0</text>
 <rect x="442" y="636" width="38" height="14" fill="#fff" stroke="#aaa"/><text x="443" y="648" fill="#7e7">-0,0280</text>
 <rect x="442" y="656" width="38" height="14" fill="#fff" stroke="#aaa"/><text x="443" y="668" fill="#e22">-0,0807</text>
 <text x="443" y="694">-0,15</text><text x="443" y="713">-0,2</text><text x="443" y="728">-0,25</text>
 <text x="443" y="760">0,8</text><text x="443" y="786">0,6</text><text x="443" y="813">0,4</text><text x="443" y="839">0,2</text><text x="443" y="864">0</text>
 <rect x="442" y="863" width="38" height="12" fill="#fff" stroke="#aaa"/><text x="443" y="874" fill="#7e7">-0,0630</text>
</g>
<rect x="0" y="0" width="2" height="873" fill="#1a2ee0"/>
<rect x="0" y="871" width="785" height="2" fill="#1a2ee0"/>
</svg>
</body></html>
